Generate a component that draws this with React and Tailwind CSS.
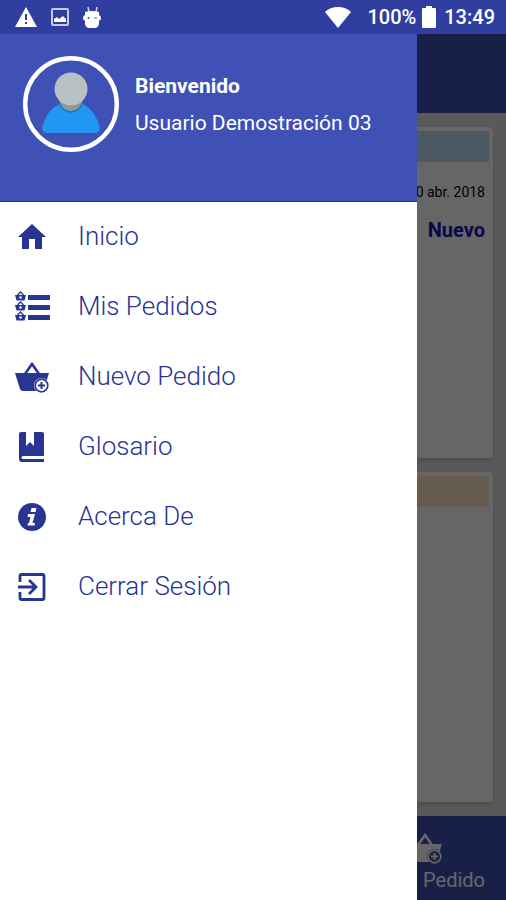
function WarningIcon() {
  return (
    <svg viewBox="0 0 22 20" className="w-[22px] h-5" aria-hidden="true">
      <path d="M11 0 22 20H0Z" fill="#fff" />
      <path d="M10 7h2v6h-2zM10 15h2v2h-2z" fill="#303f9f" />
    </svg>
  );
}

function PictureIcon() {
  return (
    <svg viewBox="0 0 18 18" className="w-[18px] h-[18px]" aria-hidden="true">
      <rect x="1" y="1" width="16" height="16" rx="1" fill="none" stroke="#c5cbea" strokeWidth="2" />
      <path d="M3 14v-3l3-2 2 2 4-3 3 3v3z" fill="#fff" />
    </svg>
  );
}

function DroidIcon() {
  return (
    <svg viewBox="0 0 18 21" className="w-[18px] h-[21px]" aria-hidden="true">
      <path d="M5 0l1 5M14 0l-1 5" stroke="#d5d9f0" strokeWidth="1.500" />
      <path d="M2 5q7-2 14 0v3q2 1 2 3t-2 3v3q-1 4-4 4H6q-3 0-4-4v-3q-2-1-2-3t2-3z" fill="#fff" />
      <circle cx="5.500" cy="11" r="1" fill="#303f9f" />
      <path d="M11 11h3" stroke="#7681c2" strokeWidth="1.200" />
    </svg>
  );
}

function WifiIcon() {
  return (
    <svg viewBox="0 0 26 21" className="w-[26px] h-[21px]" aria-hidden="true">
      <path d="M13 21 0 5Q5 0 13 0t13 5Z" fill="#fff" />
    </svg>
  );
}

function BatteryIcon() {
  return (
    <svg viewBox="0 0 14 22" className="w-[14px] h-[22px]" aria-hidden="true">
      <path d="M4 0h6v2h3q1 0 1 1v18q0 1-1 1H1q-1 0-1-1V3q0-1 1-1h3z" fill="#fff" />
    </svg>
  );
}

function Avatar() {
  return (
    <svg viewBox="0 0 96 96" className="w-24 h-24 shrink-0" role="img" aria-label="Usuario">
      <circle cx="48" cy="48" r="45.800" fill="none" stroke="#fff" strokeWidth="4.400" />
      <path d="M36 48h24q13 7 16.500 23 .8 5.500-4 6H23.500q-5-.5-4-6Q23 55 36 48Z" fill="#2196f3" />
      <path d="M37 43h22v4q-3 8-11 8t-11-8z" fill="#8f9698" />
      <path d="M36 47q4 9 12 9t12-9" fill="none" stroke="#1976bd" strokeWidth="1.500" />
      <circle cx="48" cy="33" r="16.500" fill="#b9c1c5" />
    </svg>
  );
}

function HomeIcon() {
  return (
    <svg viewBox="0 0 36 36" className="w-9 h-9" fill="currentColor" aria-hidden="true">
      <path d="M18 5 32 18h-4v12h-7V20h-6v10H8V18H4Z" />
    </svg>
  );
}

function SmallBasket({ y }) {
  return (
    <g transform={`translate(0 ${y})`}>
      <path d="M3.500 4 6.500 1l3 3" fill="none" stroke="currentColor" strokeWidth="1.300" />
      <path d="M1 4h11l-1.500 5.500h-8z" fill="currentColor" />
      <circle cx="6.500" cy="6.500" r="1.200" fill="#fff" />
    </g>
  );
}

function OrdersIcon() {
  return (
    <svg viewBox="0 0 36 36" className="w-9 h-9" aria-hidden="true">
      <SmallBasket y={2} />
      <SmallBasket y={12} />
      <SmallBasket y={22} />
      <path d="M14 6h22v5H14zM14 16h22v5H14zM14 26h22v5H14z" fill="currentColor" />
    </svg>
  );
}

function BasketIcon({ hole }) {
  return (
    <svg viewBox="0 0 36 36" className="w-9 h-9" aria-hidden="true">
      <path d="M11 15 18 5l7 10" fill="none" stroke="currentColor" strokeWidth="2.600" />
      <path d="M1 14h34l-5 16q-.5 2-3 2H9q-2.500 0-3-2Z" fill="currentColor" />
      <circle cx="27.500" cy="26.500" r="7.500" fill={hole} />
      <circle cx="27.500" cy="26.500" r="6.300" fill="none" stroke="currentColor" strokeWidth="1.700" />
      <path d="M27.500 23v7M24 26.500h7" stroke="currentColor" strokeWidth="2" />
    </svg>
  );
}

function GlossaryIcon() {
  return (
    <svg viewBox="0 0 36 36" className="w-9 h-9" aria-hidden="true">
      <path d="M7 3h5v14l4-4 4 4V3h8q2 0 2 2v22H9q-1.500 0-1.500 1.500T9 30h21v3H8q-3 0-3-3V5q0-2 2-2Z" fill="currentColor" />
    </svg>
  );
}

function InfoIcon() {
  return (
    <svg viewBox="0 0 36 36" className="w-9 h-9" aria-hidden="true">
      <circle cx="18" cy="18" r="14" fill="currentColor" />
      <path d="M17.500 9h5l-1 4h-5zM14 15h7l-2.500 9H21l-.5 2.500h-7l.5-2.500h1l1.500-6h-3z" fill="#fff" />
    </svg>
  );
}

function ExitIcon() {
  return (
    <svg viewBox="0 0 36 36" className="w-9 h-9" fill="none" stroke="currentColor" strokeWidth="2.800" aria-hidden="true">
      <path d="M6 13V7q0-1.500 1.500-1.500h21Q30 5.500 30 7v22q0 1.500-1.500 1.500h-21Q6 30.500 6 29v-6" />
      <path d="M4 18h18M15 11l7 7-7 7" />
    </svg>
  );
}

const menu = [
  { label: 'Inicio', icon: <HomeIcon /> },
  { label: 'Mis Pedidos', icon: <OrdersIcon /> },
  { label: 'Nuevo Pedido', icon: <BasketIcon hole="#fff" /> },
  { label: 'Glosario', icon: <GlossaryIcon /> },
  { label: 'Acerca De', icon: <InfoIcon /> },
  { label: 'Cerrar Sesión', icon: <ExitIcon /> },
];

function StatusBar() {
  return (
    <div className="flex h-[34px] items-center justify-between bg-[#303f9f] pl-[15px] pr-[11px] text-white">
      <div className="flex items-center gap-3.5">
        <WarningIcon />
        <PictureIcon />
        <DroidIcon />
      </div>
      <div className="flex items-center text-xl font-medium">
        <WifiIcon />
        <span className="ml-4">100%</span>
        <span className="ml-1.5">
          <BatteryIcon />
        </span>
        <span className="ml-2">13:49</span>
      </div>
    </div>
  );
}

function OrdersPage() {
  return (
    <div className="flex grow flex-col bg-[#dedede]">
      <header className="h-[79px] bg-[#3f51b5]" />
      <main className="flex grow flex-col gap-3.5 px-[13px] py-3.5">
        <section className="grow basis-0 rounded-sm bg-white p-1 text-right shadow-md">
          <div className="h-[31px] bg-[#b9dff5]" />
          <p className="mt-[18px] pr-1 text-sm leading-6 text-black">20 abr. 2018</p>
          <p className="mt-3.5 pr-1 text-xl leading-6 font-bold text-[#2510b8]">Nuevo</p>
        </section>
        <section className="grow basis-0 rounded-sm bg-white p-1 shadow-md">
          <div className="h-[31px] bg-[#ffe6c8]" />
        </section>
      </main>
      <footer className="flex h-[84px] justify-end bg-[#3f51b5] pr-[21px]">
        <button className="flex flex-col items-end pt-3.5 text-xl leading-7 text-white">
          <span className="pr-[42px]">
            <BasketIcon hole="#3f51b5" />
          </span>
          <span className="flex gap-2">
            <span>Nuevo</span>
            <span>Pedido</span>
          </span>
        </button>
      </footer>
    </div>
  );
}

function Drawer() {
  return (
    <aside className="absolute inset-y-0 left-0 w-[417px] max-w-full bg-white">
      <div className="flex h-[168px] items-start gap-4 border-b border-[#1a2fa0] bg-[#3f51b5] pl-[23px] pt-[22px] text-white">
        <Avatar />
        <div className="pt-3 text-[21px] leading-[37px]">
          <p className="font-bold">Bienvenido</p>
          <p>Usuario Demostración 03</p>
        </div>
      </div>
      <nav>
        {menu.map((item) => (
          <a
            key={item.label}
            href="#"
            className="flex h-[70px] items-center gap-7 pl-3.5 text-[26px] text-[#283593]"
          >
            {item.icon}
            <span className="pb-0.5 font-light">{item.label}</span>
          </a>
        ))}
      </nav>
    </aside>
  );
}

function App() {
  return (
    <div className="flex min-h-screen flex-col font-['Roboto',sans-serif]">
      <StatusBar />
      <div className="relative flex grow flex-col">
        <OrdersPage />
        <div className="absolute inset-0 bg-black/60" />
        <Drawer />
      </div>
    </div>
  );
}

export default App;
